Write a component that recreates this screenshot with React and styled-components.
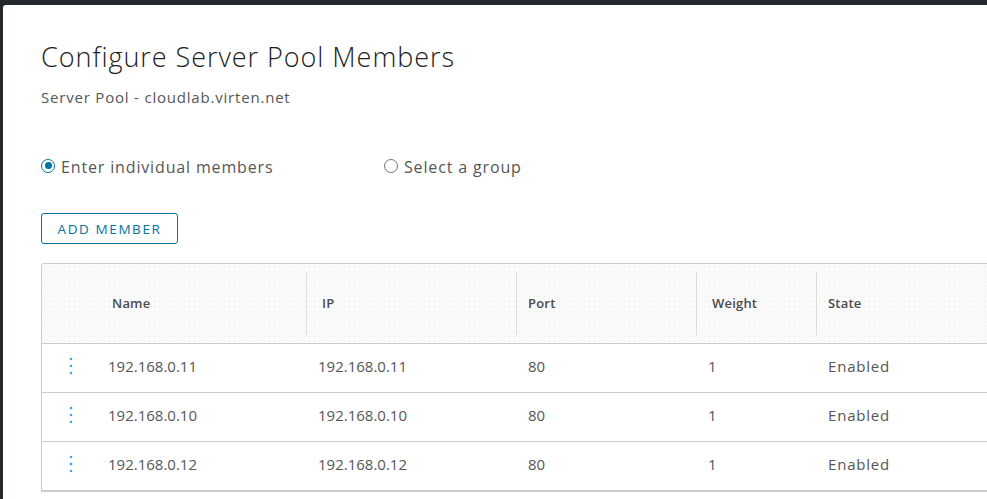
import React from 'react';
import styled, { createGlobalStyle } from 'styled-components';

var GlobalStyle = createGlobalStyle`
html, body {
  margin: 0;
  padding: 0;
  background: #25292d;
  overflow: hidden;
  height: 100%;
}
body {
  font-family: "Open Sans", "Liberation Sans", sans-serif;
}
`;

var Modal = styled.div`
margin: 5px 0 0 3px;
width: 1100px;
min-height: 520px;
background: #fff;
border-radius: 3px 0 0 0;
padding: 36px 0 0 38px;
box-sizing: border-box;
`;

var Title = styled.h2`
margin: 0;
font-size: 27px;
font-weight: 300;
color: #222;
letter-spacing: 0.95px;
line-height: 32px;
`;

var Subtitle = styled.div`
margin-top: 14px;
font-size: 15px;
color: #565656;
letter-spacing: 0.8px;
line-height: 20px;
`;

var RadioRow = styled.div`
display: flex;
margin-top: 49px;
`;

var RadioOption = styled.label`
display: flex;
align-items: center;
width: 343px;
font-size: 16px;
color: #565656;
letter-spacing: 0.85px;
gap: 6px;
`;

var RadioCircle = styled.span`
width: 14px;
height: 14px;
box-sizing: border-box;
border-radius: 50%;
border: ${p => (p.checked ? '1.5px solid #0072a3' : '1px solid #737373')};
display: inline-flex;
align-items: center;
justify-content: center;
margin-top: -3px;
&::after {
  content: '';
  width: 7px;
  height: 7px;
  border-radius: 50%;
  background: ${p => (p.checked ? '#0072a3' : 'transparent')};
}
`;

var AddButton = styled.button`
margin-top: 35px;
width: 137px;
height: 31px;
border: 1px solid #0072a3;
border-radius: 3px;
background: #fff;
color: #0072a3;
font-family: "Open Sans", "Liberation Sans", sans-serif;
font-size: 13.5px;
letter-spacing: 1.6px;
padding: 0;
`;

var Table = styled.div`
margin-top: 19px;
border: 1px solid #ccc;
border-right: none;
border-radius: 3px 0 0 0;
`;

var cols = '54px 210px 210px 180px 120px 1fr';

var HeadRow = styled.div`
display: grid;
grid-template-columns: ${cols};
height: 79px;
align-items: center;
background-color: #fafafa;
background-image: radial-gradient(#ececec 0.6px, transparent 0.9px);
background-size: 5px 5px;
border-bottom: 1px solid #ccc;
`;

var HeadCell = styled.div`
height: 63px;
display: flex;
align-items: center;
padding-left: ${p => p.pad}px;
padding-bottom: 2px;
box-sizing: border-box;
border-left: ${p => (p.sep ? '1px solid #dcdcdc' : 'none')};
font-size: 13px;
font-weight: 600;
color: #4a4a4a;
letter-spacing: 0.2px;
`;

var Row = styled.div`
display: grid;
grid-template-columns: ${cols};
height: 49px;
box-sizing: border-box;
padding-bottom: 4px;
align-items: center;
border-bottom: 1px solid #ccc;
font-size: 15px;
color: #565656;
`;

var Cell = styled.div`
padding-left: ${p => p.pad}px;
letter-spacing: ${p => p.ls || 0}px;
`;

var ActionCell = styled.div`
display: flex;
justify-content: center;
padding-left: 4px;
`;

function Kebab() {
  return (
    <svg width="4" height="20" viewBox="0 0 4 20">
      <circle cx="2" cy="3" r="1.3" fill="#4aa3df" />
      <circle cx="2" cy="10" r="1.3" fill="#4aa3df" />
      <circle cx="2" cy="17" r="1.3" fill="#4aa3df" />
    </svg>
  );
}

var members = [
  { name: '192.168.0.11', ip: '192.168.0.11', port: '80', weight: '1', state: 'Enabled' },
  { name: '192.168.0.10', ip: '192.168.0.10', port: '80', weight: '1', state: 'Enabled' },
  { name: '192.168.0.12', ip: '192.168.0.12', port: '80', weight: '1', state: 'Enabled' }
];

export default function App() {
  return (
    <>
      <GlobalStyle />
      <Modal>
        <Title>Configure Server Pool Members</Title>
        <Subtitle>Server Pool - cloudlab.virten.net</Subtitle>
        <RadioRow>
          <RadioOption><RadioCircle checked />Enter individual members</RadioOption>
          <RadioOption><RadioCircle />Select a group</RadioOption>
        </RadioRow>
        <AddButton>ADD MEMBER</AddButton>
        <Table>
          <HeadRow>
            <HeadCell />
            <HeadCell pad={16}>Name</HeadCell>
            <HeadCell sep pad={15}>IP</HeadCell>
            <HeadCell sep pad={11}>Port</HeadCell>
            <HeadCell sep pad={15}>Weight</HeadCell>
            <HeadCell sep pad={11}>State</HeadCell>
          </HeadRow>
          {members.map((m) => (
            <Row key={m.name}>
              <ActionCell><Kebab /></ActionCell>
              <Cell pad={12}>{m.name}</Cell>
              <Cell pad={12}>{m.ip}</Cell>
              <Cell pad={12}>{m.port}</Cell>
              <Cell pad={12}>{m.weight}</Cell>
              <Cell pad={12} ls={0.8}>{m.state}</Cell>
            </Row>
          ))}
        </Table>
      </Modal>
    </>
  );
}
